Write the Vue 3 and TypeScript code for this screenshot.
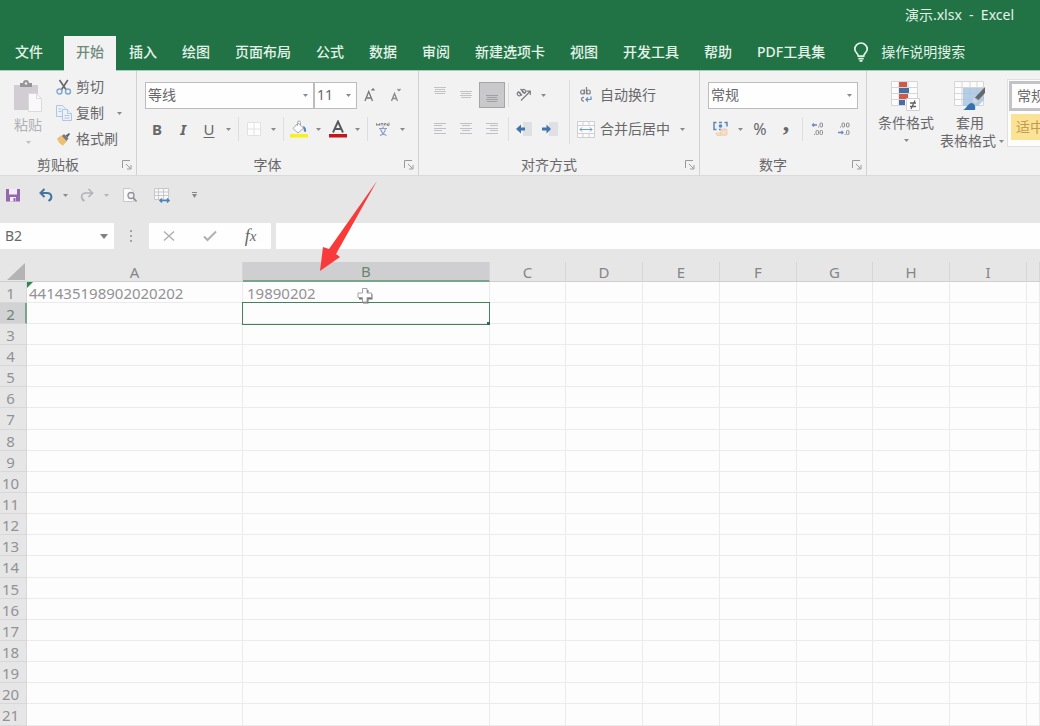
<script setup lang="ts">
import { h, ref } from 'vue'

interface Column {
  name: string
  width: number
}

const tabs: string[] = ['开始', '插入', '绘图', '页面布局', '公式', '数据', '审阅', '新建选项卡', '视图', '开发工具', '帮助', 'PDF工具集']
const activeTab = ref('开始')

const columns: Column[] = [
  { name: 'A', width: 216 },
  { name: 'B', width: 247 },
  { name: 'C', width: 76 },
  { name: 'D', width: 77 },
  { name: 'E', width: 77 },
  { name: 'F', width: 77 },
  { name: 'G', width: 76 },
  { name: 'H', width: 77 },
  { name: 'I', width: 77 },
]
const rowCount = 21
const cells: Record<string, string> = {
  A1: '441435198902020202',
  B1: '19890202',
}
const selected = { column: 'B', row: 2 }

const fontName = ref('等线')
const fontSize = ref('11')
const numberFormat = ref('常规')
const nameBox = ref('B2')
const formula = ref('')

const Caret = () =>
  h('svg', { class: 'caret', width: 5, height: 3, viewBox: '0 0 5 3', 'aria-hidden': 'true' }, [
    h('path', { d: 'M0 0h5L2.5 3z', fill: 'currentColor' }),
  ])

const Launcher = () =>
  h('svg', { width: 10, height: 10, viewBox: '0 0 10 10', fill: 'none', stroke: 'currentColor', 'aria-hidden': 'true' }, [
    h('path', { d: 'M.5 8V.5H8M4 4l4.5 4.5M9 5v4H5' }),
  ])
</script>

<template>
  <div class="app">
    <header class="top">
      <div class="title">演示.xlsx&nbsp; -&nbsp; Excel</div>
      <nav class="tabs">
        <button class="tab file" type="button">文件</button>
        <button
          v-for="tab in tabs"
          :key="tab"
          type="button"
          class="tab"
          :class="{ active: tab === activeTab }"
          @click="activeTab = tab"
        >{{ tab }}</button>
        <button class="tab tell" type="button">
          <svg width="16" height="20" viewBox="0 0 16 20" fill="none" stroke="#e2f3e8" stroke-width="1.7">
            <path d="M5.3 14.2C5.3 11.4 1.8 10.500 1.800 7.200a6.200 6.200 0 0 1 12.400 0c0 3.300-3.500 4.200-3.500 7z" />
            <path d="M5.300 16.600h5.400M6.500 18.800h3" />
          </svg>
          <span>操作说明搜索</span>
        </button>
      </nav>
    </header>

    <section class="ribbon">
      <div class="group clipboard">
        <div class="body">
          <button class="big paste" type="button">
            <svg width="32" height="34" viewBox="0 0 32 34">
              <path d="M2 5h24v25H2z" fill="#d2cdd2" />
              <path d="M8 3h3a3 3 0 0 1 6 0h3v4H8z" fill="#98959a" />
              <circle cx="14" cy="3.500" r="1.200" fill="#f2f2f2" />
              <path d="M16.500 13.500h8l5 5v13h-13z" fill="#faf8fa" stroke="#ddd8dd" />
              <path d="M24.500 13.500v5h5" fill="none" stroke="#ddd8dd" />
            </svg>
            <span>粘贴</span>
            <Caret />
          </button>
          <div class="stack">
            <button class="line" type="button">
              <svg width="16" height="16" viewBox="0 0 16 16" fill="none">
                <path d="M3.500 1l6.800 10M11.800 1L5.300 11" stroke="#6a6a6e" stroke-width="1.700" />
                <circle cx="3.500" cy="12.500" r="2.500" stroke="#7fa6cf" stroke-width="1.400" />
                <circle cx="12" cy="12.500" r="2.500" stroke="#7fa6cf" stroke-width="1.400" />
              </svg>
              <span>剪切</span>
            </button>
            <button class="line" type="button">
              <svg width="16" height="16" viewBox="0 0 16 16" fill="#eaf1fa" stroke="#b3c6de">
                <path d="M.5.5h6l3 3v8h-9z" />
                <path d="M6.500 4.500h5l4 4v7h-9z" />
                <path d="M11.500 4.500v4h4M2.500 4h3M2.500 6.500h3M8.500 10.500h5M8.500 13h5" />
              </svg>
              <span>复制</span>
              <Caret />
            </button>
            <button class="line" type="button">
              <svg width="16" height="16" viewBox="0 0 16 16">
                <path d="M1 7.500L6 4l5 6-4 4.500c-2-.5-5-3.500-6-7z" fill="#eebf73" />
                <path d="M6 5l2-2 4.500 4.500-2 2.500z" fill="#77797f" />
                <path d="M9.500 4.500L13 2l1 1-2.500 3.500z" fill="#5f6166" />
              </svg>
              <span>格式刷</span>
            </button>
          </div>
        </div>
        <div class="caption"><span>剪贴板</span><button type="button" aria-label="剪贴板设置"><Launcher /></button></div>
      </div>

      <div class="group font">
        <div class="body rows">
          <div class="row combos">
            <label class="combo family">
              <select v-model="fontName" aria-label="字体名称"><option>等线</option></select>
              <Caret />
            </label>
            <label class="combo size">
              <select v-model="fontSize" aria-label="字号"><option>11</option></select>
              <Caret />
            </label>
            <button class="tool" type="button" aria-label="增大字号">
              <svg width="14" height="16" viewBox="0 0 14 16" fill="none" stroke="#77777a" stroke-width="1.300">
                <path d="M2 14L5.700 4.500 9.500 14M3.300 11h5M8.500 3.500L10 2l1.500 1.500" />
              </svg>
            </button>
            <button class="tool" type="button" aria-label="减小字号">
              <svg width="14" height="16" viewBox="0 0 14 16" fill="none" stroke="#8a8a8e" stroke-width="1.300">
                <path d="M2.500 14l3-7.500L8.500 14M3.500 11.500h4M8.500 2L10 3.500 11.500 2" />
              </svg>
            </button>
          </div>
          <div class="row">
            <button class="tool letter bold" type="button">B</button>
            <button class="tool letter italic" type="button">I</button>
            <button class="tool letter under" type="button">U</button>
            <button class="drop" type="button" aria-label="下划线选项"><Caret /></button>
            <i class="sep"></i>
            <button class="tool" type="button" aria-label="边框">
              <svg width="16" height="16" viewBox="0 0 16 16" fill="#fdfdfd" stroke="#e2e2e4">
                <path d="M1.500 1.500h13v13h-13zM8 1.500v13M1.500 8h13" />
              </svg>
            </button>
            <button class="drop" type="button" aria-label="边框选项"><Caret /></button>
            <i class="sep"></i>
            <button class="tool" type="button" aria-label="填充颜色">
              <svg width="18" height="18" viewBox="0 0 18 18">
                <path d="M3 8.500L8 3l5.500 5-5.500 5z" fill="#fbfbfb" stroke="#a9abb0" />
                <path d="M7.500 6V2.500a1.500 1.500 0 0 1 3 0V5" fill="none" stroke="#a9abb0" />
                <path d="M13 6c2.500.5 3.500 2.500 3 6l-2-.5z" fill="#5d86ae" />
                <path d="M0 14h18v3.500H0z" fill="#f7f21c" />
              </svg>
            </button>
            <button class="drop" type="button" aria-label="填充颜色选项"><Caret /></button>
            <button class="tool" type="button" aria-label="字体颜色">
              <svg width="18" height="18" viewBox="0 0 18 18">
                <path d="M4 12.500L9 1.500l5 11M5.800 9h6.400" fill="none" stroke="#58585c" stroke-width="1.900" />
                <path d="M0 14h18v3.500H0z" fill="#c4161c" />
              </svg>
            </button>
            <button class="drop" type="button" aria-label="字体颜色选项"><Caret /></button>
            <i class="sep"></i>
            <button class="tool" type="button" aria-label="拼音指南">
              <svg width="14" height="16" viewBox="0 0 14 16" fill="none">
                <path d="M.5 4.500v-2l1.500 2 1.500-2v2M5 4.500v-2h2v2M8.500 4.500v-2h1.500v2M11.500 2.500v2h1.500v-3" stroke="#88888c" />
                <path d="M3 7.500h8M7 5.500v2M4 14.500c3-1 5-3.500 5.500-7M4.500 8c1 3 3 5.500 6 6.500" stroke="#8a9fcb" stroke-width="1.200" />
              </svg>
            </button>
            <button class="drop" type="button" aria-label="拼音选项"><Caret /></button>
          </div>
        </div>
        <div class="caption"><span>字体</span><button type="button" aria-label="字体设置"><Launcher /></button></div>
      </div>

      <div class="group align">
        <div class="body">
          <div class="rows">
            <div class="row">
              <button class="tool" type="button" aria-label="顶端对齐">
                <svg width="14" height="16" viewBox="0 0 14 16" stroke="#c3c3c6"><path d="M1 .5h12M2 2.500h10M1 4.500h12M2 6.500h10" /></svg>
              </button>
              <button class="tool" type="button" aria-label="垂直居中">
                <svg width="14" height="16" viewBox="0 0 14 16" stroke="#c3c3c6"><path d="M1 4.500h12M2 6.500h10M1 8.500h12M2 10.500h10" /></svg>
              </button>
              <button class="tool pressed" type="button" aria-label="底端对齐" aria-pressed="true">
                <svg width="14" height="16" viewBox="0 0 14 16" stroke="#a0a0a4"><path d="M1 8.500h12M2 10.500h10M1 12.500h12M2 14.500h10" /></svg>
              </button>
              <i class="sep"></i>
              <button class="tool" type="button" aria-label="方向">
                <svg width="18" height="16" viewBox="0 0 18 16" fill="none" stroke="#7c7c80" stroke-width="1.200">
                  <ellipse cx="4" cy="7" rx="2" ry="1.600" transform="rotate(45 4 7)" />
                  <path d="M3 4.500l4 4M5.500 2l4.500 4.500" />
                  <ellipse cx="9" cy="4.200" rx="2" ry="1.600" transform="rotate(45 9 4.200)" />
                  <path d="M6 13.500l9-9M11.500 4.200h3.800V8" />
                </svg>
              </button>
              <button class="drop" type="button" aria-label="方向选项"><Caret /></button>
            </div>
            <div class="row">
              <button class="tool" type="button" aria-label="左对齐">
                <svg width="14" height="14" viewBox="0 0 14 14" stroke="#c0c0c4"><path d="M1 1.500h12M1 3.500h8M1 6.500h12M1 8.500h8M1 11.500h12" /></svg>
              </button>
              <button class="tool" type="button" aria-label="居中">
                <svg width="14" height="14" viewBox="0 0 14 14" stroke="#c0c0c4"><path d="M1 1.500h12M3 3.500h8M1 6.500h12M3 8.500h8M1 11.500h12" /></svg>
              </button>
              <button class="tool" type="button" aria-label="右对齐">
                <svg width="14" height="14" viewBox="0 0 14 14" stroke="#c0c0c4"><path d="M1 1.500h12M5 3.500h8M1 6.500h12M5 8.500h8M1 11.500h12" /></svg>
              </button>
              <i class="sep"></i>
              <button class="tool" type="button" aria-label="减少缩进">
                <svg width="16" height="14" viewBox="0 0 16 14">
                  <path d="M7 0h9v14H7z" fill="#dfe0e4" />
                  <path d="M0 7l5-4.500v3h4v3H5v3z" fill="#3f76ad" />
                </svg>
              </button>
              <button class="tool" type="button" aria-label="增加缩进">
                <svg width="16" height="14" viewBox="0 0 16 14">
                  <path d="M7 0h9v14H7z" fill="#dfe0e4" />
                  <path d="M9 7L4.500 2.500v3H0v3h4.500v3z" fill="#3f76ad" />
                </svg>
              </button>
            </div>
          </div>
          <i class="sep tall"></i>
          <div class="rows">
            <div class="row">
              <button class="tool labelled" type="button">
                <svg width="18" height="18" viewBox="0 0 18 18" fill="none" stroke="#808085" stroke-width="1.200">
                  <ellipse cx="5.500" cy="6" rx="1.800" ry="2" />
                  <path d="M7.500 3.500v4.800M9.500 1v7.300" />
                  <ellipse cx="11.500" cy="6" rx="1.800" ry="2" />
                  <path d="M7 11.500c-3-1-3.500 4 0 3.500" />
                  <path d="M9 13.500h5v-3M11 11.500l-2 2 2 2" stroke="#5b8fc4" />
                </svg>
                <span>自动换行</span>
              </button>
            </div>
            <div class="row">
              <button class="tool labelled" type="button">
                <svg width="18" height="17" viewBox="0 0 18 17" fill="none">
                  <path d="M.5.5h17v16H.5zM.5 4.500h17M.5 12.500h17M6 .5v4M12 .5v4M6 12.500v4M12 12.500v4" fill="#fbfbfb" stroke="#cfcfd3" />
                  <path d="M3 8.500h12M5 6.500l-2 2 2 2M13 6.500l2 2-2 2" stroke="#6f9cc8" />
                </svg>
                <span>合并后居中</span>
              </button>
              <button class="drop merge" type="button" aria-label="合并选项"><Caret /></button>
            </div>
          </div>
        </div>
        <div class="caption"><span>对齐方式</span><button type="button" aria-label="对齐设置"><Launcher /></button></div>
      </div>

      <div class="group number">
        <div class="body rows">
          <div class="row">
            <label class="combo format">
              <select v-model="numberFormat" aria-label="数字格式"><option>常规</option></select>
              <Caret />
            </label>
          </div>
          <div class="row">
            <button class="tool" type="button" aria-label="会计数字格式">
              <svg width="18" height="16" viewBox="0 0 18 16" fill="none">
                <path d="M2 1.500h13v7H2z" fill="#e9f0f7" />
                <path d="M4.500 1.500H2v7h2.500M12.500 1.500H15v4M7 1.500h3M7 8.500h2" stroke="#5f86b0" stroke-width="1.500" />
                <circle cx="8.500" cy="5" r="1.800" fill="#5f86b0" />
                <path d="M9 8.500c3-1 6-.5 6 0s-6 1-6 0zv5c0 1 6 1 6 0v-5M4 12h5v2.500H5z" fill="#f6dfc4" stroke="#edcfae" />
              </svg>
            </button>
            <button class="drop" type="button" aria-label="会计格式选项"><Caret /></button>
            <button class="tool letter percent" type="button">%</button>
            <button class="tool letter comma" type="button">,</button>
            <i class="sep"></i>
            <button class="tool" type="button" aria-label="增加小数位数">
              <svg width="14" height="14" viewBox="0 0 14 14" fill="none" stroke="#8a8a90">
                <path d="M6 3H1.500M3 1.500L1.500 3 3 4.500" stroke="#7186bd" stroke-width="1.300" />
                <rect x="9" y="1" width="2.500" height="4" rx="1" />
                <rect x="5" y="8.500" width="2.500" height="4" rx="1" />
                <rect x="9" y="8.500" width="2.500" height="4" rx="1" />
                <path d="M7 5h1M3 12.500h1" />
              </svg>
            </button>
            <button class="tool" type="button" aria-label="减少小数位数">
              <svg width="14" height="14" viewBox="0 0 14 14" fill="none" stroke="#8a8a90">
                <rect x="5" y="1" width="2.500" height="4" rx="1" />
                <rect x="9.500" y="1" width="2.500" height="4" rx="1" />
                <path d="M1 10.500h5M4.500 9L6 10.500 4.500 12" stroke="#7186bd" stroke-width="1.300" />
                <rect x="9.500" y="8.500" width="2.500" height="4" rx="1" />
                <path d="M3 5h1M7.500 12.500h1" />
              </svg>
            </button>
          </div>
        </div>
        <div class="caption"><span>数字</span><button type="button" aria-label="数字设置"><Launcher /></button></div>
      </div>

      <div class="group styles">
        <div class="body">
          <button class="big cond" type="button">
            <svg width="30" height="32" viewBox="0 0 30 32">
              <path d="M.5 1.500h26v24H.5zM.5 7.500h26M.5 13.500h26M.5 19.500h26M8 1.500v24M17 1.500v24" fill="#fcfcfc" stroke="#d6d6d9" />
              <path d="M8 2h8v5H8z" fill="#cd5a4a" />
              <path d="M8 8h10v5H8z" fill="#446f9f" />
              <path d="M8 14h9v5H8z" fill="#cd5a4a" />
              <path d="M8 20h6v5H8z" fill="#446f9f" />
              <path d="M15.500 18.500h13v12h-13z" fill="#fff" stroke="#d0d0d3" />
              <path d="M19 23h6M19 26.500h6M24 20.500l-4 8.500" stroke="#626266" stroke-width="1.300" />
            </svg>
            <span>条件格式</span>
            <Caret />
          </button>
          <button class="big fmt" type="button">
            <svg width="32" height="32" viewBox="0 0 32 32">
              <path d="M.5 1.500h29v24H.5zM.5 7.500h29M.5 13.500h29M.5 19.500h29M8 1.500v24M16 1.500v24M23 1.500v24" fill="#fcfcfc" stroke="#d6d6d9" />
              <path d="M9 8h21v12L24 26H9z" fill="#a9c4e2" fill-opacity=".85" />
              <path d="M31 7v6l-6.500 7-3.500-2.500z" fill="#67686c" />
              <path d="M20 18.500l4 3-2 2-3.500-3z" fill="#d9d9dc" />
              <path d="M9 30c3-.5 4-6 8.500-7 3 .5 4.500 3 3.500 7z" fill="#3671ad" />
            </svg>
            <span>套用</span>
            <span class="with-caret">表格格式<Caret /></span>
          </button>
          <div class="gallery">
            <button class="swatch normal" type="button">常规</button>
            <button class="swatch neutral" type="button">适中</button>
          </div>
        </div>
      </div>
    </section>

    <section class="quick">
      <button class="qa save" type="button" aria-label="保存">
        <svg width="14" height="14" viewBox="0 0 14 14">
          <path d="M0 1h14v12.500H0z" fill="#9468ad" />
          <path d="M3 1h8v5.500H3zM4 9h6v4.500H4z" fill="#f4ecf7" />
          <path d="M7.500 10h2v3.500h-2z" fill="#9468ad" />
        </svg>
      </button>
      <button class="qa undo" type="button" aria-label="撤消">
        <svg width="14" height="14" viewBox="0 0 14 14" fill="none" stroke="#45749f" stroke-width="2">
          <path d="M5.500 1L1.500 5l4 4M2 5h6c5 0 6 5.500 1.500 8" />
        </svg>
      </button>
      <button class="drop" type="button" aria-label="撤消选项"><Caret /></button>
      <button class="qa redo" type="button" aria-label="恢复">
        <svg width="14" height="14" viewBox="0 0 14 14" fill="none" stroke="#b4b4b7" stroke-width="1.700">
          <path d="M8.500 1l4 4-4 4M12 5H6C1 5 0 10.500 4.500 13" />
        </svg>
      </button>
      <button class="drop faint" type="button" aria-label="恢复选项"><Caret /></button>
      <button class="qa preview" type="button" aria-label="打印预览">
        <svg width="16" height="16" viewBox="0 0 16 16" fill="none">
          <path d="M1.500 1.500h7l3 3v10h-10z" fill="#fafafa" stroke="#c9c9cc" />
          <circle cx="9" cy="8.500" r="3" fill="#f1f1f3" stroke="#929296" stroke-width="1.300" />
          <path d="M11.500 11l3 3.500" stroke="#929296" stroke-width="1.800" />
        </svg>
      </button>
      <button class="qa cols" type="button" aria-label="列宽">
        <svg width="18" height="16" viewBox="0 0 18 16" fill="none">
          <path d="M1.500 1.500h14v11h-14zM1.500 5h14M1.500 8.500h14M5.500 1.500v11M10.500 1.500v11" fill="#f8f8f8" stroke="#c8c8cc" />
          <path d="M7 13.500h9M9 11.500l-2 2 2 2M14 11.500l2 2-2 2" stroke="#4d83b5" stroke-width="1.500" />
        </svg>
      </button>
      <button class="drop custom" type="button" aria-label="自定义快速访问工具栏">
        <svg width="5" height="6" viewBox="0 0 5 6" fill="#88888b"><path d="M0 0h5v1H0zM0 2h5L2.500 6z" /></svg>
      </button>
    </section>

    <section class="formula-bar">
      <div class="name-box">
        <input v-model="nameBox" type="text" aria-label="名称框" />
        <button type="button" aria-label="名称列表">
          <svg width="8" height="5" viewBox="0 0 8 5"><path d="M0 0h8L4 5z" fill="#808084" /></svg>
        </button>
      </div>
      <svg class="grip" width="3" height="12" viewBox="0 0 3 12" fill="#a6a6a9"><path d="M0 0h2v2H0zM0 5h2v2H0zM0 10h2v2H0z" /></svg>
      <div class="actions">
        <button type="button" aria-label="取消">
          <svg width="12" height="12" viewBox="0 0 12 12" fill="none" stroke="#b0b0b3" stroke-width="1.500"><path d="M1 1.500l10 9M11 1.500l-10 9" /></svg>
        </button>
        <button type="button" aria-label="输入">
          <svg width="14" height="12" viewBox="0 0 14 12" fill="none" stroke="#b0b0b3" stroke-width="2"><path d="M1 6.500L4.500 10 13 1.500" /></svg>
        </button>
        <button class="fx" type="button" aria-label="插入函数"><span>f</span>x</button>
      </div>
      <input v-model="formula" class="formula" type="text" aria-label="编辑栏" />
    </section>

    <main class="sheet">
      <table>
        <colgroup>
          <col class="gutter" />
          <col v-for="c in columns" :key="c.name" :style="{ width: c.width + 'px' }" />
          <col />
        </colgroup>
        <thead>
          <tr>
            <th class="corner"><svg width="18" height="17" viewBox="0 0 18 17"><path d="M18 0v17H0z" fill="#b4b4b6" /></svg></th>
            <th v-for="c in columns" :key="c.name" scope="col" :class="{ on: c.name === selected.column }">{{ c.name }}</th>
            <th></th>
          </tr>
        </thead>
        <tbody>
          <tr v-for="r in rowCount" :key="r">
            <th scope="row" :class="{ on: r === selected.row }">{{ r }}</th>
            <td
              v-for="c in columns"
              :key="c.name"
              :class="{ current: c.name === selected.column && r === selected.row, flagged: c.name + r === 'A1' }"
            >{{ cells[c.name + r] }}</td>
            <td></td>
          </tr>
        </tbody>
      </table>
    </main>

    <svg class="pointer" width="18" height="18" viewBox="0 0 18 18">
      <path d="M7 3h5.500v4h4v5.500h-4v4H7v-4H3V7h4z" fill="#77777b" />
      <path d="M6.500 1.500h4.500v4.500h4.500v4.500H11V15H6.500v-4.500H2V6h4.500z" fill="#fff" stroke="#a2a2a6" />
    </svg>
    <svg class="arrow" width="60" height="92" viewBox="0 0 60 92">
      <path d="M58 1L10 69 4 67 1 91l20-14-4-3z" fill="#f93a3a" />
    </svg>
  </div>
</template>

<style>
body {
  background: #fdfdfd;
}
</style>

<style scoped>
.app {
  position: relative;
  min-height: 100vh;
  overflow: hidden;
  box-sizing: border-box;
  font-family: "Noto Sans", "Noto Sans CJK SC", sans-serif;
  font-size: 14px;
  line-height: 18px;
  color: #68686b;
  background: #fdfdfd;
}

button,
input,
select {
  font: inherit;
  color: inherit;
  background: none;
  border: 0;
  border-radius: 0;
  padding: 0;
  margin: 0;
  outline: 0;
  white-space: nowrap;
}

svg {
  display: block;
  flex: none;
}

.top {
  background: #217346;
  color: #e4f2e9;
  border-bottom: 1px solid #a3cdb5;
}

.title {
  padding: 6px 26px 0 0;
  height: 30px;
  box-sizing: border-box;
  text-align: right;
}

.tabs {
  display: flex;
  gap: 1px;
  padding-top: 6px;
  height: 41px;
  box-sizing: border-box;
  margin-bottom: -1px;
}

.tab {
  flex: none;
  padding: 0 12px 3px;
  font-weight: 500;
}

.tab.file {
  padding: 0 20px 3px 15px;
}

.tab.active {
  background: #f2f2f2;
  color: #6f8a7b;
}

.tab.tell {
  display: flex;
  align-items: center;
  gap: 12px;
  padding-left: 15px;
  font-weight: 400;
}

.ribbon {
  display: flex;
  height: 104px;
  overflow: hidden;
  background: #f2f2f2;
  border-bottom: 1px solid #dadadb;
}

.group {
  flex: none;
  display: flex;
  flex-direction: column;
  box-sizing: border-box;
  border-right: 1px solid #d2d2d4;
}

.body {
  display: flex;
  height: 82px;
}

.rows {
  display: flex;
  flex-direction: column;
}

.body > .rows,
.body.rows {
  padding-top: 7px;
  box-sizing: border-box;
}

.row {
  display: flex;
  align-items: center;
  height: 34px;
}

.caption {
  display: flex;
  align-items: center;
  height: 22px;
  padding-top: 1px;
  box-sizing: border-box;
}

.caption span {
  flex: 1;
  text-align: center;
}

.caption button {
  display: flex;
  width: 20px;
  padding-left: 6px;
  box-sizing: border-box;
  color: #9a9a9d;
}

.clipboard {
  width: 137px;
}

.font {
  width: 282px;
}

.align {
  width: 281px;
}

.number {
  width: 167px;
}

.styles {
  flex: 1 0 auto;
  border-right: 0;
}

.font .body {
  padding-left: 7px;
}

.align .body,
.number .body {
  padding-left: 8px;
}

.big {
  display: flex;
  flex-direction: column;
  align-items: center;
  padding-top: 9px;
}

.big > .caret {
  margin-top: 7px;
}

.big svg + span {
  margin-top: 2px;
}

.paste {
  width: 56px;
  color: #b1b1b4;
}

.stack {
  display: flex;
  flex-direction: column;
  padding-top: 3px;
}

.line {
  display: flex;
  align-items: center;
  gap: 4px;
  height: 26px;
}

.line .caret {
  margin-left: 9px;
}

.caret {
  color: #8a8a8d;
}

.paste .caret {
  color: #c0c0c3;
}

.tool {
  display: flex;
  align-items: center;
  justify-content: center;
  width: 26px;
  height: 26px;
}

.tool.pressed {
  background: #c9c9cb;
  border: 1px solid #a5a5a8;
  box-sizing: border-box;
}

.tool.labelled {
  width: auto;
  padding-left: 5px;
  gap: 5px;
}

.letter {
  font-size: 15px;
}

.bold {
  font-weight: 700;
}

.italic {
  font-style: italic;
  font-weight: 700;
}

.under {
  text-decoration: underline;
  text-underline-offset: 2px;
}

.percent {
  font-size: 16px;
}

.comma {
  font-family: "Liberation Serif", serif;
  font-size: 26px;
  font-weight: 700;
  padding-bottom: 12px;
  box-sizing: border-box;
}

.drop {
  display: flex;
  align-items: center;
  justify-content: center;
  width: 13px;
  height: 26px;
}

.drop.merge {
  margin-left: 6px;
}

.drop.faint {
  opacity: 0.5;
}

.sep {
  width: 6px;
  height: 24px;
  display: flex;
  justify-content: center;
}

.sep::before {
  content: "";
  width: 1px;
  background: #dededf;
}

.sep.tall {
  height: 64px;
  margin: 9px 0 0 3px;
}

.combos {
  padding-left: 1px;
}

.combo {
  display: grid;
  align-items: center;
  height: 27px;
  box-sizing: border-box;
  border: 1px solid #bcbcbe;
  background: #fefefe;
}

.combo select,
.combo .caret {
  grid-area: 1 / 1;
}

.combo select {
  appearance: none;
  width: 100%;
  height: 25px;
  padding-left: 2px;
}

.combo .caret {
  justify-self: end;
  margin-right: 5px;
  pointer-events: none;
}

.family {
  width: 169px;
}

.size {
  width: 43px;
}

.format {
  width: 150px;
}

.cond {
  width: 60px;
  margin-left: 9px;
}

.fmt {
  width: 68px;
}

.fmt .with-caret {
  display: flex;
  align-items: center;
  gap: 3px;
  padding-left: 4px;
}

.gallery {
  display: flex;
  flex-direction: column;
  gap: 3px;
  flex: 1;
  height: 68px;
  margin: 8px 0 0 3px;
  padding: 1px 0 5px 1px;
  box-sizing: border-box;
  border: 1px solid #e0e0e1;
  background: #fdfdfd;
}

.swatch {
  width: 76px;
  height: 30px;
  padding-left: 5px;
  box-sizing: border-box;
  text-align: left;
}

.normal {
  border: 3px solid #c3c3c5;
}

.neutral {
  height: 26px;
  margin-left: 2px;
  padding-left: 5px;
  background: #fbe396;
  color: #c39a50;
}

.quick {
  display: flex;
  align-items: center;
  height: 38px;
  padding: 0 0 9px;
  background: #e6e6e7;
}

.qa {
  display: flex;
  align-items: center;
  justify-content: center;
  width: 26px;
  height: 26px;
}

.undo {
  margin-left: 7px;
}

.redo {
  margin-left: 2px;
}

.preview {
  margin-left: 4px;
}

.cols {
  margin-left: 6px;
}

.custom {
  margin-left: 13px;
}

.formula-bar {
  display: flex;
  align-items: center;
  height: 26px;
  padding-bottom: 13px;
  background: #e6e6e7;
}

.name-box {
  display: flex;
  align-items: center;
  width: 114px;
  height: 26px;
  background: #fefefe;
}

.name-box input {
  flex: 1;
  min-width: 0;
  padding-left: 5px;
}

.name-box button {
  display: flex;
  padding: 8px 6px;
}

.grip {
  margin: 0 16px;
}

.actions {
  display: flex;
  align-items: center;
  width: 122px;
  height: 26px;
  background: #fefefe;
}

.actions button {
  display: flex;
  flex: 1;
  justify-content: center;
}

.actions .fx {
  font-family: "Liberation Serif", serif;
  font-style: italic;
  font-size: 15px;
}

.fx span {
  font-size: 18px;
}

.formula {
  flex: 1;
  min-width: 0;
  height: 26px;
  margin-left: 5px;
  padding-left: 5px;
  background: #fefefe;
}

.sheet {
  font-size: 15px;
  color: #929295;
}

table {
  width: 100%;
  table-layout: fixed;
  border-spacing: 0;
}

.gutter {
  width: 27px;
}

th,
td {
  height: 21px;
  box-sizing: border-box;
  padding: 0;
  line-height: 18px;
  overflow: hidden;
  white-space: nowrap;
}

tbody tr:nth-child(7n) > * {
  height: 22px;
}

tbody th,
tbody td {
  padding-top: 1px;
}

th {
  font-weight: 400;
  background: #e6e6e7;
}

thead th {
  height: 20px;
  border-right: 1px solid #d6d6d8;
  border-bottom: 1px solid #cfcfd1;
  color: #858588;
}

thead th.on {
  background: #cfcfd1;
  border-bottom: 2px solid #7ba48c;
  color: #6c8577;
}

thead .corner {
  padding-left: 7px;
  border-right-color: #e6e6e7;
}

tbody th {
  padding-right: 5px;
  border-right: 1px solid #d8d8da;
  border-bottom: 1px solid #d8d8da;
}

tbody th.on {
  background: #d2d2d4;
  border-right: 2px solid #7ba48c;
  padding-right: 4px;
  color: #6c8577;
}

td {
  padding-left: 2px;
  border-right: 1px solid #ebebec;
  border-bottom: 1px solid #ebebec;
  background: #fdfdfd;
}

td + td {
  padding-left: 4px;
}

.flagged {
  position: relative;
}

.flagged::before {
  content: "";
  position: absolute;
  left: 0;
  top: 0;
  border-top: 6px solid #2b8a4b;
  border-right: 6px solid transparent;
}

.current {
  position: relative;
  overflow: visible;
}

.current::before {
  content: "";
  position: absolute;
  inset: -1px -1px -2px -1px;
  border: 1px solid #47805f;
}

.current::after {
  content: "";
  position: absolute;
  right: -1px;
  bottom: -2px;
  width: 3px;
  height: 3px;
  background: #2f6e4b;
}

.pointer {
  position: absolute;
  left: 356px;
  top: 287px;
}

.arrow {
  position: absolute;
  left: 319px;
  top: 180px;
}
</style>
